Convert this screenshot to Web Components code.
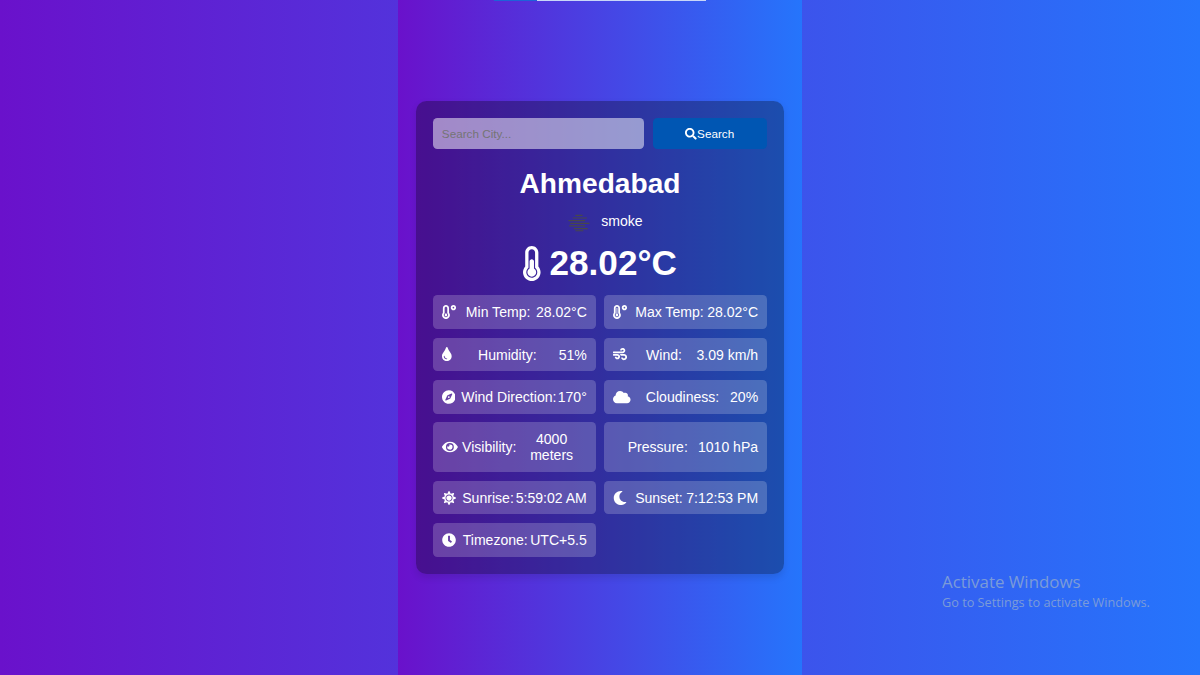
<!DOCTYPE html>
<html lang="en">
<head>
<meta charset="UTF-8">
<title>Weather App</title>
<style>
    html, body {
        height: 100%;
        margin: 0;
    }
    body {
        font-family: "Liberation Sans", Arial, sans-serif;
        overflow: hidden;
    }
</style>
</head>
<body>
<weather-app></weather-app>
<script>
// name: [width of the 512 high viewBox, path]
const icons = {
    search: [512, 'M505 442.7L405.3 343c-4.5-4.5-10.6-7-17-7H372c27.6-35.3 44-79.7 44-128C416 93.1 322.9 0 208 0S0 93.1 0 208s93.1 208 208 208c48.3 0 92.7-16.4 128-44v16.3c0 6.4 2.5 12.5 7 17l99.7 99.7c9.4 9.4 24.6 9.4 33.9 0l28.3-28.3c9.4-9.4 9.4-24.6.1-34zM208 336c-70.7 0-128-57.2-128-128 0-70.7 57.2-128 128-128 70.7 0 128 57.2 128 128 0 70.7-57.2 128-128 128z'],
    thermometer: [256, 'M192 384c0 35.346-28.654 64-64 64s-64-28.654-64-64c0-23.685 12.876-44.349 32-55.417V224c0-17.673 14.327-32 32-32s32 14.327 32 32v104.583c19.124 11.068 32 31.732 32 55.417zm32-84.653c19.912 22.563 32 52.194 32 84.653 0 70.696-57.303 128-128 128-.299 0-.609-.001-.909-.003C56.789 511.509-.357 453.636.002 383.333.166 351.135 12.22 321.755 32 299.347V96c0-53.019 42.981-96 96-96s96 42.981 96 96v203.347zM208 384c0-34.339-19.37-52.19-32-66.502V96c0-26.467-21.533-48-48-48S80 69.533 80 96v221.498c-12.732 14.428-31.825 32.1-31.999 66.08-.224 43.876 35.563 80.116 79.423 80.42L128 464c44.112 0 80-35.888 80-80z'],
    low: [512, 'M416 0c-52.9 0-96 43.1-96 96s43.1 96 96 96 96-43.1 96-96-43.1-96-96-96zm0 128c-17.7 0-32-14.3-32-32s14.3-32 32-32 32 14.3 32 32-14.3 32-32 32zm-160-16C256 50.1 205.9 0 144 0S32 50.1 32 112v166.5C12.3 303.2 0 334 0 368c0 79.5 64.5 144 144 144s144-64.5 144-144c0-34-12.3-64.9-32-89.5V112zM144 448c-44.1 0-80-35.9-80-80 0-25.5 12.2-48.9 32-63.8V112c0-26.5 21.5-48 48-48s48 21.5 48 48v192.2c19.8 14.8 32 38.3 32 63.8 0 44.1-35.9 80-80 80zm16-125.1V304c0-8.8-7.2-16-16-16s-16 7.2-16 16v18.9c-18.6 6.6-32 24.2-32 45.1 0 26.5 21.5 48 48 48s48-21.5 48-48c0-20.9-13.4-38.5-32-45.1z'],
    high: [512, 'M416 0c-52.9 0-96 43.1-96 96s43.1 96 96 96 96-43.1 96-96-43.1-96-96-96zm0 128c-17.7 0-32-14.3-32-32s14.3-32 32-32 32 14.3 32 32-14.3 32-32 32zm-160-16C256 50.1 205.9 0 144 0S32 50.1 32 112v166.5C12.3 303.2 0 334 0 368c0 79.5 64.5 144 144 144s144-64.5 144-144c0-34-12.3-64.9-32-89.5V112zM144 448c-44.1 0-80-35.9-80-80 0-25.5 12.2-48.9 32-63.8V112c0-26.5 21.5-48 48-48s48 21.5 48 48v192.2c19.8 14.8 32 38.3 32 63.8 0 44.1-35.9 80-80 80zm16-125.1V112c0-8.8-7.2-16-16-16s-16 7.2-16 16v210.9c-18.6 6.6-32 24.2-32 45.1 0 26.5 21.5 48 48 48s48-21.5 48-48c0-20.9-13.4-38.5-32-45.1z'],
    drop: [352, 'M205.22 22.09c-7.94-28.78-49.44-30.12-58.44 0C100.01 179.85 0 222.72 0 333.91 0 432.35 78.72 512 176 512s176-79.65 176-178.09c0-111.75-99.79-153.34-146.78-311.82zM176 448c-61.75 0-112-50.25-112-112 0-8.84 7.16-16 16-16s16 7.16 16 16c0 44.11 35.89 80 80 80 8.84 0 16 7.16 16 16s-7.16 16-16 16z'],
    wind: [512, 'M156.7 256H16c-8.8 0-16 7.2-16 16v32c0 8.8 7.2 16 16 16h142.2c15.9 0 30.8 10.9 33.4 26.6 3.3 20-12.1 37.4-31.6 37.4-14.1 0-26.1-9.2-30.4-21.9-2.1-6.3-8.6-10.1-15.2-10.1H81.6c-9.8 0-17.7 8.8-15.9 18.4 8.6 44.1 47.6 77.6 94.2 77.6 57.1 0 102.7-50.1 95.2-108.6C249 291 205.4 256 156.7 256zM16 224h336c59.7 0 106.8-54.8 93.8-116.7-7.6-36.2-36.9-65.5-73.1-73.1-55.4-11.6-105.1 24.9-114.9 75.5-1.9 9.6 6.1 18.3 15.8 18.3h32.8c6.7 0 13.1-3.8 15.2-10.1C325.9 105.2 337.9 96 352 96c19.4 0 34.9 17.4 31.6 37.4-2.6 15.7-17.4 26.6-33.4 26.6H16c-8.8 0-16 7.2-16 16v32c0 8.8 7.2 16 16 16zm384 32H243.7c19.3 16.6 33.2 38.8 39.8 64H400c26.5 0 48 21.5 48 48s-21.5 48-48 48c-17.9 0-33.3-9.9-41.6-24.4-2.9-5-8.7-7.6-14.5-7.6h-33.8c-10.9 0-19 10.8-15.3 21.1 17.8 50.6 70.5 84.8 129.4 72.3 41.2-8.7 75.1-41.6 84.7-82.7C526 321.5 470.5 256 400 256z'],
    compass: [496, 'M225.38 233.37c-12.5 12.5-12.5 32.76 0 45.25 12.49 12.5 32.76 12.5 45.25 0 12.5-12.5 12.5-32.76 0-45.25-12.5-12.49-32.76-12.49-45.25 0zM248 8C111.03 8 0 119.03 0 256s111.03 248 248 248 248-111.03 248-248S384.97 8 248 8zm126.14 148.05L308.17 300.4a31.938 31.938 0 0 1-15.77 15.77l-144.34 65.97c-16.65 7.61-33.81-9.55-26.2-26.2l65.98-144.35a31.938 31.938 0 0 1 15.77-15.77l144.34-65.97c16.65-7.6 33.8 9.55 26.19 26.2z'],
    cloud: [640, 'M537.6 226.6c4.1-10.7 6.4-22.4 6.4-34.6 0-53-43-96-96-96-19.7 0-38.1 6-53.3 16.2C367 64.2 315.3 32 256 32c-88.4 0-160 71.6-160 160 0 2.7.1 5.4.2 8.1C40.2 219.8 0 273.2 0 336c0 79.5 64.5 144 144 144h368c70.7 0 128-57.3 128-128 0-61.9-44-113.6-102.4-125.4z'],
    eye: [576, 'M572.52 241.4C518.29 135.59 410.93 64 288 64S57.68 135.64 3.48 241.41a32.35 32.35 0 0 0 0 29.19C57.71 376.41 165.07 448 288 448s230.32-71.64 284.52-177.41a32.35 32.35 0 0 0 0-29.19zM288 400a144 144 0 1 1 144-144 143.93 143.93 0 0 1-144 144zm0-240a95.31 95.31 0 0 0-25.31 3.79 47.85 47.85 0 0 1-66.9 66.9A95.78 95.78 0 1 0 288 160z'],
    sun: [512, 'M256 160c-52.9 0-96 43.1-96 96s43.1 96 96 96 96-43.1 96-96-43.1-96-96-96zm246.4 80.5l-94.7-47.3 33.5-100.4c4.5-13.6-8.4-26.5-21.9-21.9l-100.4 33.5-47.4-94.8c-6.4-12.8-24.6-12.8-31 0l-47.3 94.7L92.7 70.8c-13.6-4.5-26.5 8.4-21.9 21.9l33.5 100.4-94.7 47.4c-12.8 6.4-12.8 24.6 0 31l94.7 47.3-33.5 100.5c-4.5 13.6 8.4 26.5 21.9 21.9l100.4-33.5 47.3 94.7c6.4 12.8 24.6 12.8 31 0l47.3-94.7 100.4 33.5c13.6 4.5 26.5-8.4 21.9-21.9l-33.5-100.4 94.7-47.3c13-6.5 13-24.7.2-31.1zm-155.9 106c-49.9 49.9-131.1 49.9-181 0-49.9-49.9-49.9-131.1 0-181 49.9-49.9 131.1-49.9 181 0 49.9 49.9 49.9 131.1 0 181z'],
    moon: [512, 'M283.211 512c78.962 0 151.079-35.925 198.857-94.792 7.068-8.708-.639-21.43-11.562-19.35-124.203 23.654-238.262-71.576-238.262-196.954 0-72.222 38.662-138.635 101.498-174.394 9.686-5.512 7.25-20.197-3.756-22.23A258.156 258.156 0 0 0 283.211 0c-141.309 0-256 114.511-256 256 0 141.309 114.511 256 256 256z'],
    clock: [512, 'M256 8C119 8 8 119 8 256s111 248 248 248 248-111 248-248S393 8 256 8zm57.1 350.1L224.9 294c-3.1-2.3-4.9-5.9-4.9-9.7V116c0-6.6 5.4-12 12-12h48c6.6 0 12 5.4 12 12v137.7l63.5 46.2c5.4 3.9 6.5 11.4 2.6 16.8l-28.2 38.8c-3.9 5.3-11.4 6.5-16.8 2.6z']
};

class WeatherIcon extends HTMLElement {
    connectedCallback() {
        this.attachShadow({ mode: 'open' });
        const icon = icons[this.getAttribute('name')];
        this.shadowRoot.innerHTML = `
        <style>
            :host { display: block; flex: none; }
            svg { display: block; height: 1em; fill: currentColor; }
        </style>
        ${icon ? `<svg viewBox="0 0 ${icon[0]} 512"><path d="${icon[1]}"/></svg>` : ''}`;
    }
}

class WeatherDetail extends HTMLElement {
    connectedCallback() {
        this.attachShadow({ mode: 'open' });
        this.shadowRoot.innerHTML = `
        <style>
            :host {
                display: flex;
                align-items: center;
                justify-content: space-between;
                padding: 10px;
                border-radius: 5px;
                background: rgba(255, 255, 255, 0.2);
                text-align: center;
            }
            weather-icon { margin-right: 5px; }
        </style>
        <weather-icon name="${this.getAttribute('icon') || ''}"></weather-icon>
        <span>${this.getAttribute('label')}:</span>
        <span><slot></slot></span>`;
    }
}

class CitySearch extends HTMLElement {
    connectedCallback() {
        this.attachShadow({ mode: 'open' });
        this.shadowRoot.innerHTML = `
        <style>
            :host { display: flex; gap: 10px; }
            input, button {
                box-sizing: border-box;
                height: 35px;
                border: none;
                border-radius: 5px;
                padding: 10px;
                font-family: inherit;
                font-size: 13.333px;
            }
            input {
                width: 240px;
                background: rgba(255, 255, 255, 0.5);
            }
            input::placeholder { color: #757575; }
            button {
                flex: 1;
                display: flex;
                align-items: center;
                justify-content: center;
                background: #0056b3;
                color: #fff;
            }
        </style>
        <input type="text" placeholder="Search City...">
        <button><weather-icon name="search"></weather-icon>Search</button>`;
    }
}

class WeatherCard extends HTMLElement {
    connectedCallback() {
        this.attachShadow({ mode: 'open' });
        this.shadowRoot.innerHTML = `
        <style>
            :host {
                display: block;
                box-sizing: border-box;
                width: 420px;
                padding: 20px;
                border-radius: 12px;
                background: rgba(0, 0, 0, 0.3);
                box-shadow: 0 4px 8px rgba(0, 0, 0, 0.1);
                color: #fff;
            }
            h1 {
                margin: 21px 0 0;
                font-size: 32px;
                text-align: center;
            }
            .condition, .temp {
                display: flex;
                align-items: center;
                justify-content: center;
            }
            .condition svg { width: 50px; height: 50px; }
            .temp {
                margin-bottom: 13.6px;
                font-size: 40px;
                font-weight: bold;
            }
            .temp weather-icon { margin-right: 10px; }
            .details {
                display: grid;
                grid-template-columns: 1fr 1fr;
                gap: 10px;
            }
        </style>
        <city-search></city-search>
        <h1>Ahmedabad</h1>
        <div class="condition">
            <svg viewBox="0 0 50 50" fill="none" stroke="#48484a" stroke-width="1.4">
                <path d="M21 17.5h8M18 20.5h16M13 23.5h19M15 26.5h22M14 29.5h18M19 32.500h16M21 35h9"/>
            </svg>
            <span>smoke</span>
        </div>
        <div class="temp"><weather-icon name="thermometer"></weather-icon><span>28.02°C</span></div>
        <div class="details">
            <weather-detail icon="low" label="Min Temp">28.02°C</weather-detail>
            <weather-detail icon="high" label="Max Temp">28.02°C</weather-detail>
            <weather-detail icon="drop" label="Humidity">51%</weather-detail>
            <weather-detail icon="wind" label="Wind">3.09 km/h</weather-detail>
            <weather-detail icon="compass" label="Wind Direction">170°</weather-detail>
            <weather-detail icon="cloud" label="Cloudiness">20%</weather-detail>
            <weather-detail icon="eye" label="Visibility">4000 meters</weather-detail>
            <weather-detail label="Pressure">1010 hPa</weather-detail>
            <weather-detail icon="sun" label="Sunrise">5:59:02 AM</weather-detail>
            <weather-detail icon="moon" label="Sunset">7:12:53 PM</weather-detail>
            <weather-detail icon="clock" label="Timezone">UTC+5.5</weather-detail>
        </div>`;
    }
}

class ActivateNotice extends HTMLElement {
    connectedCallback() {
        this.attachShadow({ mode: 'open' });
        this.shadowRoot.innerHTML = `
        <style>
            :host {
                display: block;
                font-family: "Open Sans", sans-serif;
                color: #7b9bd8;
                white-space: nowrap;
            }
            p { margin: 0; }
            .title { font-size: 16.9px; line-height: 22px; }
            .hint { font-size: 12.7px; line-height: 18px; }
        </style>
        <p class="title">Activate Windows</p>
        <p class="hint">Go to Settings to activate Windows.</p>`;
    }
}

class WeatherApp extends HTMLElement {
    connectedCallback() {
        this.attachShadow({ mode: 'open' });
        this.shadowRoot.innerHTML = `
        <style>
            :host {
                position: relative;
                display: flex;
                justify-content: center;
                height: 100%;
                background: linear-gradient(to right, #6a11cb, #2575fc);
            }
            .panel {
                display: flex;
                align-items: center;
                padding: 0 20px;
                background: linear-gradient(to right, #6a11cb, #2575fc);
                zoom: 0.8785;
            }
            .loading {
                position: absolute;
                top: 0;
                left: 494px;
                width: 212px;
                height: 1px;
                background: linear-gradient(to right, #1e62d8 43px, #c9d6f8 43px);
            }
            activate-notice {
                position: absolute;
                left: 942px;
                top: 571px;
            }
        </style>
        <div class="panel"><weather-card></weather-card></div>
        <div class="loading"></div>
        <activate-notice></activate-notice>`;
    }
}

customElements.define('weather-icon', WeatherIcon);
customElements.define('weather-detail', WeatherDetail);
customElements.define('city-search', CitySearch);
customElements.define('weather-card', WeatherCard);
customElements.define('activate-notice', ActivateNotice);
customElements.define('weather-app', WeatherApp);
</script>
</body>
</html>
